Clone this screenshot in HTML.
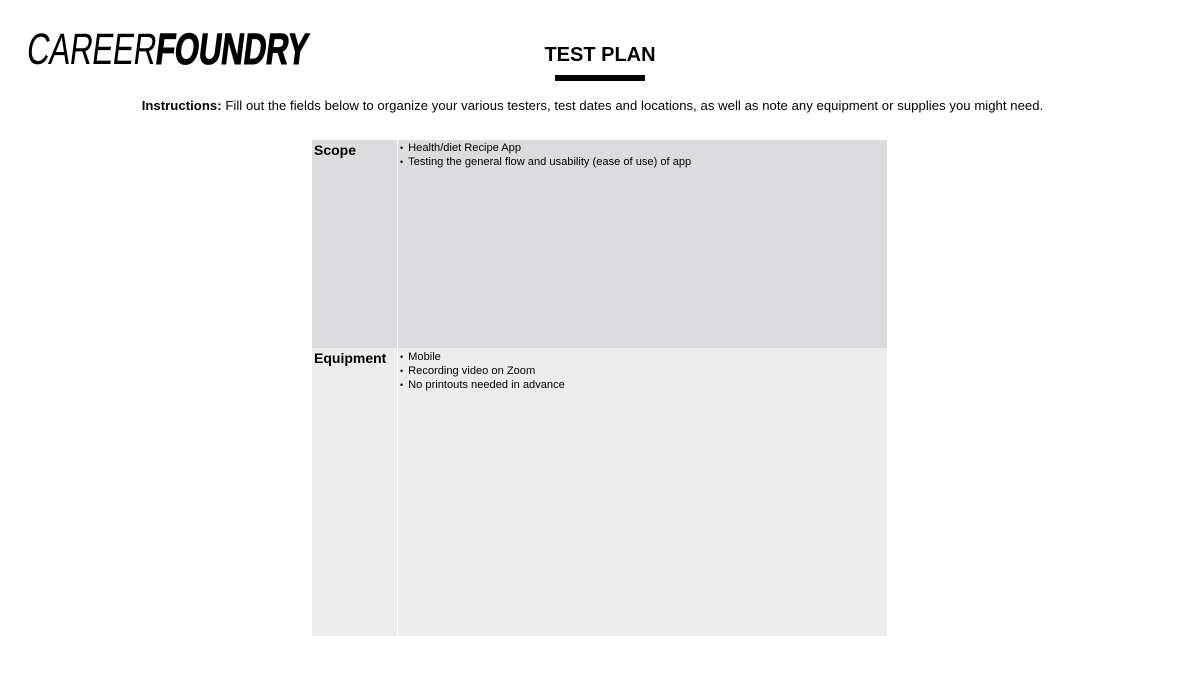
<!DOCTYPE html>
<html><head><style>
body{margin:0;width:1200px;height:675px;background:#fff;font-family:"Liberation Sans",Arial,sans-serif;position:relative;overflow:hidden;color:#000}
.logo{position:absolute;left:30px;top:28px;font-size:44px;line-height:44px;white-space:nowrap;transform-origin:0 0;transform:scaleX(0.715) skewX(-10deg);letter-spacing:-0.5px}
.logo .a{font-weight:normal}
.logo .b{font-weight:bold;-webkit-text-stroke:1px #000}
.title{position:absolute;left:0;width:1200px;top:44px;text-align:center;font-weight:bold;font-size:20px}
.bar{position:absolute;left:555px;top:75px;width:90px;height:6px;background:#000}
.inst{position:absolute;left:0;width:1185px;top:98px;text-align:center;font-size:13.1px;letter-spacing:0.05px}
.row{position:absolute;left:312px;width:575px}
.lab{position:absolute;left:0;top:0;width:85px;height:100%;font-weight:bold;font-size:14px;padding:2px 0 0 2px;box-sizing:border-box}
.div{position:absolute;left:85px;top:0;width:1px;height:100%;background:#fff}
.txt{position:absolute;left:87px;top:1px;font-size:11.1px;line-height:14px}
.txt div::before{content:"•";margin:0 5px 0 1px;font-size:9px}
</style></head><body>
<div class="logo"><span class="a">CAREER</span><span class="b">FOUNDRY</span></div>
<div class="title">TEST PLAN</div>
<div class="bar"></div>
<div class="inst"><b>Instructions:</b> Fill out the fields below to organize your various testers, test dates and locations, as well as note any equipment or supplies you might need.</div>
<div class="row" style="top:140px;height:208px;background:#dcdcde">
<div class="lab">Scope</div><div class="div"></div>
<div class="txt"><div>Health/diet Recipe App</div><div>Testing the general flow and usability (ease of use) of app</div></div></div>
<div class="row" style="top:348px;height:288px;background:#ececec">
<div class="lab" style="padding-top:2px">Equipment</div><div class="div"></div>
<div class="txt" style="top:2px"><div>Mobile</div><div>Recording video on Zoom</div><div>No printouts needed in advance</div></div></div>
</body></html>
